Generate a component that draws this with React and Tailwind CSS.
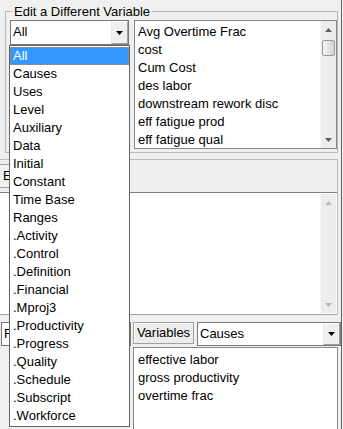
import React from "react";

const dropItems = ["All","Causes","Uses","Level","Auxiliary","Data","Initial","Constant","Time Base","Ranges",".Activity",".Control",".Definition",".Financial",".Mproj3",".Productivity",".Progress",".Quality",".Schedule",".Subscript",".Workforce"];
const vars = ["Avg Overtime Frac","cost","Cum Cost","des labor","downstream rework disc","eff fatigue prod","eff fatigue qual"];
const causes = ["effective labor","gross productivity","overtime frac"];

function Tri({ up = false, color = "#000" }) {
  return (
    <svg width="7" height="4" viewBox="0 0 7 4" className="block">
      <polygon points={up ? "0,4 7,4 3.5,0" : "0,0 7,0 3.5,4"} fill={color} />
    </svg>
  );
}

function VScroll({ thumb = false, disabled = false }) {
  const c = disabled ? "#b8b8b8" : "#606060";
  return (
    <div className="w-[16px] shrink-0 flex flex-col bg-[#ededed] border-l border-[#f8f8f8]">
      <div className="h-[17px] flex items-center justify-center"><Tri up color={c} /></div>
      <div className="flex-1">
        {thumb && (
          <div className="mt-[2px] mx-[1px] h-[16px] rounded-[2px] border border-[#9a9a9a] bg-gradient-to-r from-[#f6f6f6] to-[#d4d4d4]" />
        )}
      </div>
      <div className="h-[17px] flex items-center justify-center"><Tri color={c} /></div>
    </div>
  );
}

function Combo({ text, className }) {
  return (
    <div className={"border border-[#7a7a7a] bg-white flex " + className}>
      <div className="flex-1 pl-[2px] leading-[22px] truncate">{text}</div>
      <div className="w-[17px] h-full bg-[#efefef] border-l border-t border-l-[#e8e8e8] border-t-white border-r border-b border-r-[#a0a0a0] border-b-[#a0a0a0] flex items-center justify-center">
        <Tri />
      </div>
    </div>
  );
}

export default function App() {
  return (
    <div className="relative w-[343px] h-[429px] overflow-hidden bg-[#f0f0f0] font-['Liberation_Sans',Arial,sans-serif] text-[13px] text-black">
      <div className="w-[342px] h-full border-r border-[#646464] flex flex-col">
        {/* group box */}
        <fieldset className="shrink-0 ml-[5px] mr-[3px] mt-[4px] border border-[#b9b9b9] pl-[4px] pb-[3px] min-w-0">
          <legend className="ml-[2px] px-[2px] leading-[15px]">Edit a Different Variable</legend>
          <div className="flex items-start gap-[5px] pt-[1px]">
            <Combo text="All" className="w-[119px] h-[25px] shrink-0" />
            <div className="w-[203px] h-[129px] border border-[#828790] bg-white flex">
              <div className="flex-1 pt-[2px] pl-[3px] overflow-hidden">
                {vars.map((v) => (
                  <div key={v} className="h-[18px] leading-[18px] whitespace-nowrap">{v}</div>
                ))}
              </div>
              <VScroll thumb />
            </div>
          </div>
        </fieldset>

        {/* middle panel */}
        <div className="shrink-0 mt-[6px] mr-[3px] h-[156px] border-t border-r border-[#bcbcbc] flex flex-col">
          <div className="h-[32px] shrink-0 bg-[#eeeeee] flex items-center">
            <div className="h-[24px] w-[14px] pl-[3px] border-t border-b border-[#a0a0a0] bg-[#f0f0f0] leading-[22px]">E</div>
          </div>
          <div className="flex-1 border-t border-b border-t-[#808080] border-b-[#a0a0a0] bg-white flex justify-end pr-[1px]">
            <div className="flex py-[1px]">
              <VScroll disabled />
            </div>
          </div>
        </div>

        {/* bottom panel */}
        <div className="shrink-0 mt-[7px] flex items-start">
          <div className="ml-[1px] w-[130px] h-[24px] border border-[#7a7a7a] bg-white pl-[2px] leading-[22px]">R</div>
          <div className="ml-[2px] w-[61px] h-[22px] border border-[#a0a0a0] bg-[#ececec] shadow-[inset_1px_1px_0_#fff] text-center leading-[20px]">Variables</div>
          <Combo text="Causes" className="ml-[3px] w-[144px] h-[24px]" />
        </div>
        <div className="mt-[1px] ml-[133px] w-[205px] h-[100px] shrink-0 border border-[#828790] bg-white pt-[3px] pl-[4px]">
          {causes.map((c) => (
            <div key={c} className="h-[18px] leading-[18px] whitespace-nowrap">{c}</div>
          ))}
        </div>
      </div>

      {/* open dropdown list */}
      <div className="absolute left-[9px] top-[45px] w-[121px] border border-[#646464] bg-white pt-[1px] pb-[1px]">
        {dropItems.map((it, i) =>
          i === 0 ? (
            <div key={it} className="h-[18px] leading-[16px] pl-[2px] bg-[#3399ff] text-white border border-dotted border-[#d9822b]">{it}</div>
          ) : (
            <div key={it} className="h-[18px] leading-[18px] pl-[3px] whitespace-nowrap">{it}</div>
          )
        )}
      </div>
    </div>
  );
}
